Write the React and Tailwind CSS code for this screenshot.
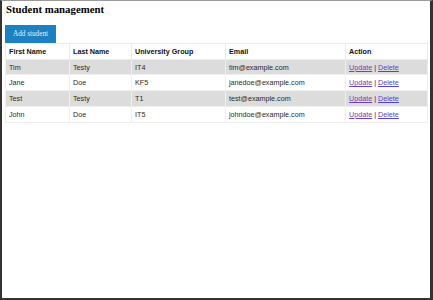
import React from "react";

const rows = [
  ["Tim", "Testy", "IT4", "tim@example.com"],
  ["Jane", "Doe", "KF5", "janedoe@example.com"],
  ["Test", "Testy", "T1", "test@example.com"],
  ["John", "Doe", "IT5", "johndoe@example.com"],
];

export default function App() {
  return (
    <div className="w-[433px] h-[300px] bg-white border-t border-t-[#9a9a9a] border-l-2 border-l-[#333] border-r-[3px] border-r-[#333] border-b-2 border-b-[#333] pl-[3px] pt-[2px] flex flex-col">
      <div className="font-['Liberation_Serif',serif] font-bold text-[10.8px] leading-[13px] text-black pl-[1px]">
        Student management
      </div>
      <div className="mt-[9px]">
        <div className="w-[51px] h-[18px] bg-[#1c80c3] text-[#e8f0fa] font-['Liberation_Serif',serif] text-[7.2px] flex items-center justify-center">
          Add student
        </div>
      </div>
      <table className="w-[422px] border-collapse font-['Liberation_Sans',Arial,sans-serif] text-[7.2px] text-[#222] table-fixed">
        <colgroup>
          <col className="w-[64px]" />
          <col className="w-[62px]" />
          <col className="w-[94px]" />
          <col className="w-[120px]" />
          <col className="w-[82px]" />
        </colgroup>
        <thead>
          <tr className="h-[15.5px]">
            {["First Name", "Last Name", "University Group", "Email", "Action"].map((h) => (
              <th key={h} className="border border-[#ececec] text-left font-bold text-[#111] pl-[3px] pt-[2px] pb-0 pr-0">
                {h}
              </th>
            ))}
          </tr>
        </thead>
        <tbody>
          {rows.map((r, i) => (
            <tr key={i} className={"h-[15.8px] " + (i % 2 === 0 ? "bg-[#dcdcdc]" : "bg-white")}>
              {r.map((c, j) => (
                <td key={j} className="border border-[#efefef] pl-[3px] pt-[2px] pb-0 pr-0 text-[#2a2a2a]">
                  {c}
                </td>
              ))}
              <td className="border border-[#efefef] pl-[3px] pt-[2px] pb-0 pr-0 text-[#2a2a2a]">
                <span className="underline text-[#7541b8]">Update</span>
                <span> | </span>
                <span className="underline text-[#5a3fd8]">Delete</span>
              </td>
            </tr>
          ))}
        </tbody>
      </table>
    </div>
  );
}
